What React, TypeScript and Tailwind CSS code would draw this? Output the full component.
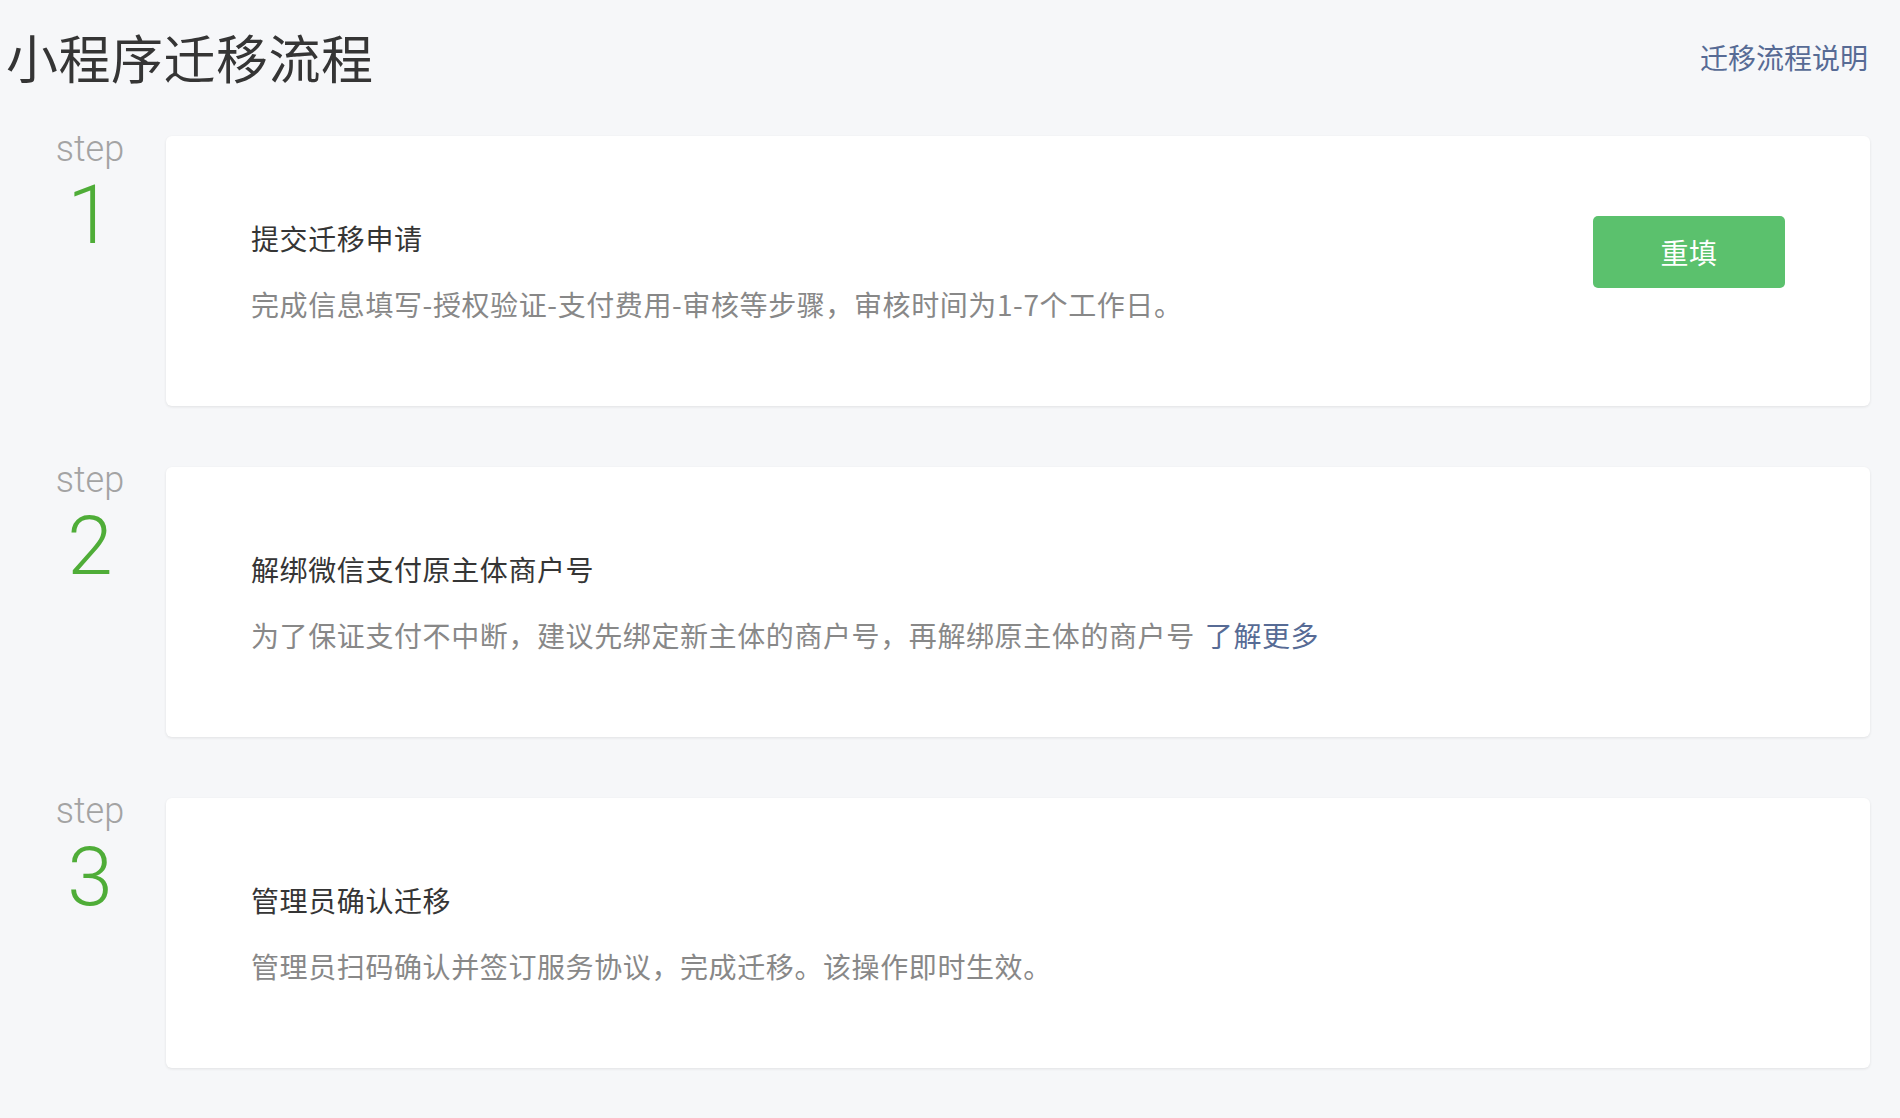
import React from "react";

const cjk = "font-['Noto_Sans_CJK_SC',sans-serif]";
const latin = "font-['Roboto','Noto_Sans_CJK_SC',sans-serif]";

type Step = {
  no: number;
  title: string;
  desc: string;
  link?: string;
  action?: string;
};

const steps: Step[] = [
  {
    no: 1,
    title: "提交迁移申请",
    desc: "完成信息填写-授权验证-支付费用-审核等步骤，审核时间为1-7个工作日。",
    action: "重填",
  },
  {
    no: 2,
    title: "解绑微信支付原主体商户号",
    desc: "为了保证支付不中断，建议先绑定新主体的商户号，再解绑原主体的商户号",
    link: "了解更多",
  },
  {
    no: 3,
    title: "管理员确认迁移",
    desc: "管理员扫码确认并签订服务协议，完成迁移。该操作即时生效。",
  },
];

const StepRow = ({ step }: { step: Step }) => (
  <div className="flex items-start">
    <div className={`w-[160px] shrink-0 pl-[8px] -mt-[7px] flex flex-col items-center ${latin}`}>
      <div className="text-[36px] leading-[40px] font-light text-[#a3a3a3]">step</div>
      <div className="mt-[5px] text-[82px] leading-[82px] font-light text-[#4fad38]">{step.no}</div>
    </div>
    <div className="flex-1 h-[270px] bg-white rounded-[6px] shadow-[0_1px_3px_rgba(0,0,0,0.09)] pl-[85px] pr-[85px] pt-[79px] flex justify-between items-start">
      <div className={`${cjk} tracking-[0.6px]`}>
        <div className="text-[28px] leading-[46px] text-[#353535]">{step.title}</div>
        <div className="mt-[20px] text-[28px] leading-[46px] text-[#888888]">
          {step.desc}
          {step.link && (
            <a href="#" className="ml-[10px] text-[#576b95]">
              {step.link}
            </a>
          )}
        </div>
      </div>
      {step.action && (
        <button
          className={`mt-[1px] w-[192px] h-[72px] rounded-[5px] bg-[#5bc16d] text-white text-[28px] tracking-[0.5px] ${cjk}`}
        >
          {step.action}
        </button>
      )}
    </div>
  </div>
);

const App = () => {
  return (
    <div className="min-h-screen bg-[#f6f7f9] pl-[6px] pr-[30px] pt-[31px] pb-[50px]">
      <div className={`flex items-center justify-between ${cjk}`}>
        <h1 className="text-[52px] leading-[52px] font-normal tracking-[0.5px] text-[#353535]">小程序迁移流程</h1>
        <a href="#" className="mr-[2px] text-[28px] leading-[40px] text-[#576b95]">
          迁移流程说明
        </a>
      </div>
      <div className="mt-[53px] flex flex-col gap-[61px]">
        {steps.map((s) => (
          <StepRow key={s.no} step={s} />
        ))}
      </div>
    </div>
  );
};

export default App;
